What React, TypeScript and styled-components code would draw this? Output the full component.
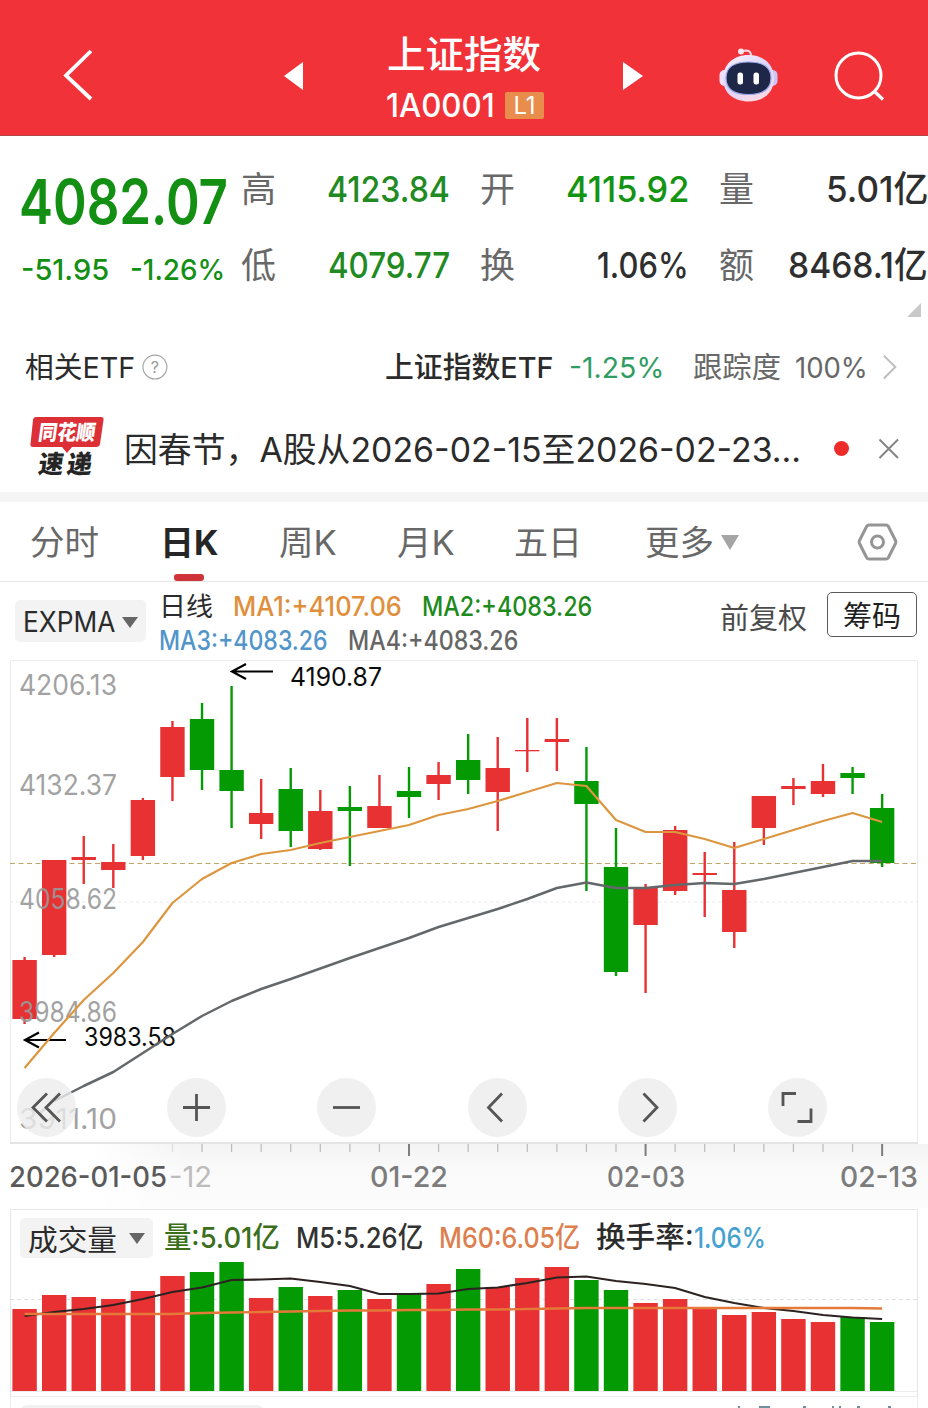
import React, { useLayoutEffect, useRef, useState } from "react";
import styled, { createGlobalStyle } from "styled-components";

const RED = "#e73133";
const GREEN = "#049a04";
const FONT = `Inter, "Noto Sans CJK SC", sans-serif`;

const GlobalStyle = createGlobalStyle`
  * { box-sizing: border-box; }
  body { margin: 0; background: #fff; font-family: ${FONT}; font-feature-settings: "case" 1; }
`;

const FitBox = styled.span<{ $w: number }>`
  display: inline-block;
  flex: none;
  width: ${(p) => p.$w}px;
  white-space: nowrap;
  text-align: left;
`;
const FitInner = styled.span`
  display: inline-block;
  transform-origin: 0 50%;
`;
function Fit({ w, children }: { w: number; children: React.ReactNode }) {
  const ref = useRef<HTMLSpanElement>(null);
  const [scale, setScale] = useState(1);
  useLayoutEffect(() => {
    if (ref.current) setScale(w / ref.current.offsetWidth);
  }, [w]);
  return (
    <FitBox $w={w}>
      <FitInner ref={ref} style={{ transform: `scaleX(${scale})` }}>{children}</FitInner>
    </FitBox>
  );
}

const Screen = styled.main`
  width: 928px;
  height: 1408px;
  overflow: hidden;
  display: flex;
  flex-direction: column;
  background: #fff;
  color: #2b2b2b;
`;

/* ---------- header ---------- */
const Header = styled.header`
  height: 136px;
  flex: none;
  background: #f13239;
  border-bottom: 1px solid #b5484a;
  display: grid;
  grid-template-columns: 62px 32px 190px 20px 1fr 20px 76px 60px 55px 50px 44px;
  align-items: center;
  padding-top: 16px;
  color: #fff;
`;
const TitleBlock = styled.div`
  display: flex;
  flex-direction: column;
  align-items: center;
  padding-top: 9px;
`;
const Title = styled.div`
  font-size: 38px;
  line-height: 50px;
  font-weight: 500;
`;
const CodeRow = styled.div`
  display: flex;
  align-items: center;
  gap: 10px;
  height: 52px;
  margin-left: 2px;
  font-size: 33px;
  font-weight: 500;
`;
const LevelTag = styled.span`
  width: 39px;
  height: 27px;
  border-radius: 2px;
  background: #e88d4b;
  font-size: 24px;
  font-weight: 400;
  line-height: 27px;
  text-align: center;
  padding-left: 1px;
`;

/* ---------- quote ---------- */
const Quote = styled.section`
  height: 194px;
  flex: none;
  position: relative;
  display: grid;
  grid-template-columns: 211px repeat(3, 209px);
  column-gap: 30px;
  padding-top: 15px;
  margin-right: -2px;
`;
const PriceCell = styled.div`
  padding-left: 19px;
  color: #138f13;
`;
const Price = styled.div`
  font-size: 62px;
  line-height: 76px;
  margin-top: 13px;
  font-weight: 600;
`;
const Change = styled.div`
  display: flex;
  gap: 21px;
  font-size: 29px;
  line-height: 36px;
  margin-top: 12px;
  font-weight: 500;
  margin-left: 2px;
`;
const StatCell = styled.dl`
  margin: 0;
`;
const Stat = styled.div`
  height: 76px;
  display: flex;
  align-items: center;
  justify-content: space-between;
`;
const StatName = styled.dt`
  font-size: 35px;
  line-height: 50px;
  color: #686868;
`;
const StatValue = styled.dd<{ $c?: string }>`
  margin: 0;
  font-size: 36px;
  line-height: 50px;
  font-weight: 500;
  color: ${(p) => p.$c || "#2f2f2f"};
`;
const Corner = styled.i`
  position: absolute;
  right: 9px;
  top: 167px;
  border-left: 14px solid transparent;
  border-bottom: 14px solid #c9c9c9;
`;

/* ---------- etf and news ---------- */
const EtfRow = styled.section`
  height: 76px;
  flex: none;
  display: flex;
  align-items: center;
  padding: 0 30px 0 25px;
  font-size: 29px;
  line-height: 40px;
`;
const HelpIcon = styled.svg`
  margin-left: 7px;
`;
const EtfMain = styled.div`
  display: flex;
  margin-left: 216px;
  font-weight: 500;
`;
const EtfChange = styled.span`
  color: #2f9d62;
  font-weight: 400;
  margin-left: 15px;
`;
const EtfTrack = styled.span`
  display: flex;
  gap: 14px;
  color: #686868;
  margin-left: 29px;
  margin-right: 13px;
`;
const NewsRow = styled.section`
  height: 86px;
  flex: none;
  display: flex;
  align-items: center;
  padding: 2px 0 0 30px;
  font-size: 34px;
  line-height: 48px;
`;
const NewsLogo = styled.svg`
  width: 74px;
  height: 62px;
  margin: -6px 20px 0 0;
`;
const Dot = styled.i`
  width: 15px;
  height: 15px;
  border-radius: 50%;
  background: #ee2b2b;
  margin: -4px 29px 0 33px;
`;
const Close = styled.svg`
  margin-top: -2px;
`;
const Band = styled.div`
  height: 10px;
  flex: none;
  background: #f5f5f5;
`;

/* ---------- tabs ---------- */
const Tabs = styled.nav`
  height: 80px;
  flex: none;
  display: flex;
  align-items: center;
  border-bottom: 1px solid #e6e6e6;
  padding: 2px 0 0 30px;
  color: #686868;
  font-size: 34px;
  line-height: 50px;
`;
const Tab = styled.span<{ $gap: number; $active?: boolean }>`
  position: relative;
  margin-right: ${(p) => p.$gap}px;
  font-weight: ${(p) => (p.$active ? 700 : 400)};
  color: ${(p) => (p.$active ? "#262626" : "inherit")};
  &::after {
    content: "";
    display: ${(p) => (p.$active ? "block" : "none")};
    position: absolute;
    left: 14px;
    bottom: -13px;
    width: 30px;
    height: 7px;
    border-radius: 3px;
    background: #cf3438;
  }
`;
const Caret = styled.i<{ $c: string; $s: number; $h: number }>`
  border: ${(p) => p.$s}px solid transparent;
  border-bottom: 0;
  border-top: ${(p) => p.$h}px solid ${(p) => p.$c};
`;
const SettingsIcon = styled.svg`
  margin: -2px 0 0 118px;
`;

/* ---------- indicator legend ---------- */
const Legend = styled.section`
  height: 78px;
  flex: none;
  display: flex;
  align-items: flex-start;
  padding-left: 15px;
`;
const Chip = styled.button<{ $w: number; $h: number; $size: number; $top?: number }>`
  border: 0;
  padding: ${(p) => p.$top || 0}px 8px 0;
  margin: 0;
  width: ${(p) => p.$w}px;
  height: ${(p) => p.$h}px;
  border-radius: 5px;
  background: #f3f3f3;
  display: flex;
  align-items: center;
  justify-content: space-between;
  font-family: inherit;
  font-size: ${(p) => p.$size}px;
  color: #2b2b2b;
`;
const LegendChip = styled.div`
  margin-top: 18px;
`;
const LegendLines = styled.div`
  width: 561px;
  margin: 7px 0 0 13px;
  font-size: 26.5px;
  line-height: 34px;
`;
const LegendLine = styled.div`
  display: flex;
  gap: 20px;
  height: 34px;
`;
const Ink = styled.span<{ $c: string; $pull?: number }>`
  color: ${(p) => p.$c};
  font-weight: 500;
  display: flex;
  margin-left: ${(p) => -(p.$pull || 0)}px;
`;
const Adjust = styled.span`
  font-size: 29px;
  line-height: 42px;
  margin-top: 16px;
  color: #4b4b4b;
`;
const ChipsButton = styled.button`
  width: 90px;
  height: 45px;
  margin: 10px 0 0 20px;
  padding: 3px 0 0;
  background: #fff;
  border: 1px solid #5a5a5a;
  border-radius: 5px;
  font: 29px/41px ${FONT};
  color: #1f1f1f;
`;

/* ---------- charts ---------- */
const ChartArea = styled.section`
  position: relative;
  height: 548px;
  flex: none;
`;
const Plot = styled.svg`
  display: block;
  font-family: ${FONT};
`;
const Controls = styled.div`
  position: absolute;
  left: 17px;
  top: 418px;
  display: flex;
  gap: 91.2px;
`;
const Round = styled.button`
  width: 59px;
  height: 59px;
  padding: 0;
  border: 0;
  border-radius: 50%;
  background: rgba(236, 236, 236, 0.8);
  display: grid;
  place-items: center;
`;
const Volume = styled.section`
  height: 188px;
  flex: none;
  position: relative;
`;
const VolumeHead = styled.div`
  position: absolute;
  left: 20px;
  top: 10px;
  display: flex;
  align-items: center;
  gap: 11px;
  font-size: 29px;
  line-height: 40px;
`;
const VolumeItems = styled.div`
  display: flex;
  gap: 16px;
`;
const NextPanel = styled.section`
  height: 12px;
  flex: none;
  margin: 0 10px;
  border: 1px solid #ececec;
  border-bottom: 0;
  overflow: hidden;
  display: flex;
  justify-content: space-between;
  padding: 8px 20px 0 10px;
`;
const NextChip = styled.span`
  width: 242px;
  height: 40px;
  border-radius: 6px;
  background: #f1f1f1;
`;

const X0 = 24.6;
const STEP = 29.57;
const cx = (i: number) => X0 + STEP * i;

/* [rising, body top, body bottom, high, low, volume top] */
const DAYS: [number, number, number, number, number, number][] = [
  [1, 960, 1019, 957, 1024, 1309], [1, 860, 955, 860, 957, 1295], [1, 857, 860, 836, 884, 1297],
  [1, 862, 870, 844, 888, 1299], [1, 800, 856, 798, 860, 1291], [1, 727, 777, 721, 801, 1276],
  [0, 719, 770, 703, 790, 1272], [0, 770, 791, 686, 828, 1262], [1, 813, 824, 779, 839, 1298],
  [0, 789, 831, 768, 847, 1287], [1, 811, 849, 790, 850, 1296], [0, 807, 811, 786, 866, 1290],
  [1, 806, 828, 775, 828, 1299], [0, 791, 797, 767, 818, 1293], [1, 775, 784, 762, 800, 1284],
  [0, 760, 780, 734, 794, 1269], [1, 768, 792, 737, 831, 1287], [1, 750, 751, 718, 772, 1278],
  [1, 739, 742, 718, 771, 1267], [0, 781, 804, 747, 891, 1280], [0, 867, 972, 828, 976, 1290],
  [1, 887, 925, 884, 993, 1303], [1, 830, 891, 826, 895, 1299], [1, 873, 875, 852, 917, 1308],
  [1, 890, 932, 842, 948, 1315], [1, 796, 828, 796, 845, 1312], [1, 786, 789, 778, 805, 1319],
  [1, 781, 794, 764, 797, 1322], [0, 773, 778, 767, 794, 1317], [0, 808, 863, 794, 867, 1322],
];
const FAST = [1068, 1033, 1000, 973, 942, 903, 879, 863, 854, 850, 843, 837, 831, 825, 815, 809, 801, 792, 783, 786, 820, 832, 832, 839, 848, 839, 830, 821, 813, 822];
const SLOW = [1115, 1101, 1086, 1072, 1053, 1034, 1016, 1001, 989, 979, 968.5, 958, 948, 938, 927, 918, 909, 899, 888, 882.5, 888, 888, 885, 883, 884, 879, 873, 867, 861, 861];
const VOL5 = [1316, 1312, 1309, 1305, 1299, 1292, 1287.5, 1280, 1279.5, 1278.5, 1282, 1286, 1294, 1294, 1293.5, 1289, 1287.5, 1283, 1277.5, 1276.5, 1281, 1284, 1288, 1297, 1303, 1308, 1311, 1315, 1317.5, 1319];
const VOL60 = [1314, 1314, 1314, 1314, 1314, 1314, 1313, 1312.5, 1312, 1311.5, 1311, 1310.5, 1310.5, 1310, 1310, 1309.5, 1309.5, 1309, 1308.5, 1308, 1308, 1308, 1308, 1308, 1308, 1308, 1308, 1308, 1308, 1308.5];
const line = (v: number[], from = 0) =>
  v.slice(from).map((y, i) => `${cx(i + from).toFixed(1)},${y}`).join(" ");

const LEVELS: [string, number][] = [["4206.13", 695], ["4132.37", 795], ["4058.62", 909], ["3984.86", 1022], ["3911.10", 1129]];

function Candles() {
  return (
    <Plot width="928" height="548" viewBox="0 660 928 548">
      <defs>
        <linearGradient id="axis" x1="0" x2="0" y1="0" y2="1">
          <stop offset="0" stopColor="#f3f3f3" />
          <stop offset="0.4" stopColor="#fafafa" />
          <stop offset="1" stopColor="#fcfcfc" />
        </linearGradient>
        <linearGradient id="axisFade" x1="0" x2="1" y1="0" y2="0">
          <stop offset="0.1" stopColor="#fff" />
          <stop offset="0.2" stopColor="#fff" stopOpacity="0" />
        </linearGradient>
      </defs>
      <rect x="0" y="1144" width="928" height="64" fill="url(#axis)" />
      <rect x="0" y="1144" width="928" height="64" fill="url(#axisFade)" />
      <path d="M10.500 660.500H917.500V1143H10.500Z" fill="#fff" stroke="#ebebeb" />
      <path d="M10 1143H918" stroke="#e4e4e4" strokeWidth="2" />
      <path d="M10 902H917" stroke="#e9e9e9" strokeDasharray="3 3" />
      <path d="M10 863.500H917" stroke="#c2a468" strokeDasharray="5 3.500" strokeWidth="1.200" />
      {DAYS.map(([up, top, bottom, high, low], i) => (
        <g key={i} fill={up ? RED : GREEN}>
          <rect x={cx(i) - 1.2} y={high} width="2.4" height={low - high} />
          <rect x={cx(i) - 12.2} y={top} width="24.4" height={Math.max(bottom - top, 1.3)} />
        </g>
      ))}
      <g fontSize="28.500" fill="#999" fillOpacity="0.92">
        {LEVELS.map(([t, y]) => (
          <text key={t} x="19" y={y} textLength="98" lengthAdjust="spacingAndGlyphs">{t}</text>
        ))}
      </g>
      <g fontSize="25" fill="#0c0c0c">
        <text x="290" y="686" textLength="92" lengthAdjust="spacingAndGlyphs">4190.87</text>
        <text x="84" y="1046" textLength="92" lengthAdjust="spacingAndGlyphs">3983.58</text>
      </g>
      <g stroke="#000" strokeWidth="2.200" fill="none">
        <path d="M273 671.500H232M246 664L232 671.500L246 679" />
        <path d="M66 1040H25M39 1032.500L25 1040L39 1047.500" />
      </g>
      <polyline points={line(SLOW, 1)} fill="none" stroke="#64686a" strokeWidth="2.500" strokeLinejoin="round" />
      <polyline points={line(FAST)} fill="none" stroke="#dc963f" strokeWidth="2.200" strokeLinejoin="round" />
      {DAYS.map((_, i) => {
        if (i < 5) return null;
        const major = i === 13 || i === 21 || i === 29;
        return (
          <rect key={i} x={cx(i) - (major ? 1 : 0.6)} y="1144" width={major ? 2 : 1.2} height={major ? 12 : 8} fill={major ? "#7d7d7d" : i === 5 ? "#dedede" : "#bababa"} />
        );
      })}
      <g fontSize="28.500" fontWeight="500" fill="#7c7c7c">
        <text x="9" y="1187" fill="#5a5a5a" textLength="158" lengthAdjust="spacingAndGlyphs">2026-01-05</text>
        <text x="169" y="1187" fill="#bcbcbc" fontWeight="400" textLength="43" lengthAdjust="spacingAndGlyphs">-12</text>
        <text x="370" y="1187" textLength="78" lengthAdjust="spacingAndGlyphs">01-22</text>
        <text x="607" y="1187" textLength="78" lengthAdjust="spacingAndGlyphs">02-03</text>
        <text x="840" y="1187" textLength="78" lengthAdjust="spacingAndGlyphs">02-13</text>
      </g>
    </Plot>
  );
}

function VolumeBars() {
  return (
    <Plot width="928" height="188" viewBox="0 1208 928 188">
      <path d="M10.500 1396V1209.500H917.500V1396" fill="none" stroke="#e6e6e6" />
      <path d="M10 1299.500H917" stroke="#dfe3e0" strokeDasharray="4 3" />
      <path d="M10 1391.500H917" stroke="#ececec" />
      {DAYS.map((d, i) => (
        <rect key={i} x={cx(i) - 12.2} y={d[5]} width="24.4" height={1391 - d[5]} fill={d[0] ? RED : GREEN} />
      ))}
      <polyline points={line(VOL5)} fill="none" stroke="#2d2222" strokeWidth="2.200" />
      <polyline points={line(VOL60)} fill="none" stroke="#e5793a" strokeWidth="2.400" />
    </Plot>
  );
}

const ICONS = [
  "M30 15.500L16 29.500L30 43.500M43 15.500L29 29.500L43 43.500",
  "M16 29.500H43M29.500 16V43",
  "M16 29.500H43",
  "M34 15.500L20.500 29.500L34 43.500",
  "M25.500 15.500L39 29.500L25.500 43.500",
  "M15 28V15.500H28M43 30.500V43.500H29.500",
];

function Robot() {
  return (
    <svg width="60" height="56" viewBox="0 0 60 56">
      <defs>
        <linearGradient id="shell" x1="0" x2="0.6" y1="0" y2="1">
          <stop offset="0" stopColor="#fff4fb" />
          <stop offset="0.55" stopColor="#d9d3fb" />
          <stop offset="1" stopColor="#fbd9e6" />
        </linearGradient>
      </defs>
      <path d="M22 3L28 2.500Q32 3 32 8" fill="none" stroke="#fbd5df" strokeWidth="2.200" />
      <circle cx="22" cy="3.500" r="3" fill="#ffe6ec" />
      <rect x="0.500" y="22" width="10" height="16" rx="5" fill="#f2dffa" />
      <rect x="48.500" y="22" width="10" height="16" rx="5" fill="#c9c6fa" />
      <path d="M29.500 7C45 7 55 17 55 30.500C55 45 44 53.500 29.500 53.500C15 53.500 4 45 4 30.500C4 17 14 7 29.500 7Z" fill="url(#shell)" />
      <path d="M29.500 14C44 14 52 19 52 30C52 42 43 46.500 29.500 46.500C16 46.500 7 42 7 30C7 19 15 14 29.500 14Z" fill="#1f2748" stroke="#9aa9ea" strokeWidth="1.200" />
      <rect x="18.500" y="24.500" width="5.500" height="12" rx="2.500" fill="#fff" />
      <rect x="34.500" y="24.500" width="5.500" height="12" rx="2.500" fill="#fff" />
    </svg>
  );
}

export default function App() {
  return (
    <Screen>
      <GlobalStyle />
      <Header>
        <span />
        <svg width="32" height="54" viewBox="0 0 32 54"><path d="M29 2L4 26.500L29 50" fill="none" stroke="#fff" strokeWidth="3.800" /></svg>
        <span />
        <svg width="20" height="30" viewBox="0 0 20 30"><path d="M0 15L19 1V29Z" fill="#fff" /></svg>
        <TitleBlock>
          <Title><Fit w={154}>上证指数</Fit></Title>
          <CodeRow><Fit w={109}>1A0001</Fit><LevelTag>L1</LevelTag></CodeRow>
        </TitleBlock>
        <svg width="20" height="30" viewBox="0 0 20 30"><path d="M20 15L0 1V29Z" fill="#fff" /></svg>
        <span />
        <Robot />
        <span />
        <svg width="52" height="52" viewBox="0 0 52 52"><circle cx="24.500" cy="25.500" r="22.500" fill="none" stroke="#fff" strokeWidth="3" /><path d="M40 41L49 49.500" stroke="#fff" strokeWidth="3.200" /></svg>
      </Header>

      <Quote>
        <PriceCell>
          <Price><Fit w={209}>4082.07</Fit></Price>
          <Change><Fit w={88}>-51.95</Fit><Fit w={95}>-1.26%</Fit></Change>
        </PriceCell>
        <StatCell>
          <Stat><StatName>高</StatName><StatValue $c="#228a22"><Fit w={123}>4123.84</Fit></StatValue></Stat>
          <Stat><StatName>低</StatName><StatValue $c="#228a22"><Fit w={122}>4079.77</Fit></StatValue></Stat>
        </StatCell>
        <StatCell>
          <Stat><StatName>开</StatName><StatValue $c="#139413"><Fit w={123}>4115.92</Fit></StatValue></Stat>
          <Stat><StatName>换</StatName><StatValue><Fit w={92}>1.06%</Fit></StatValue></Stat>
        </StatCell>
        <StatCell>
          <Stat><StatName>量</StatName><StatValue><Fit w={102}>5.01亿</Fit></StatValue></Stat>
          <Stat><StatName>额</StatName><StatValue><Fit w={140}>8468.1亿</Fit></StatValue></Stat>
        </StatCell>
        <Corner />
      </Quote>

      <EtfRow>
        <Fit w={110}>相关ETF</Fit>
        <HelpIcon width="28" height="28" viewBox="0 0 28 28">
          <circle cx="13.500" cy="13" r="12.500" fill="none" stroke="#a3a3a3" strokeWidth="1.200" />
          <text x="13.500" y="19" textAnchor="middle" fontSize="17" fill="#999">?</text>
        </HelpIcon>
        <EtfMain>
          <Fit w={169}>上证指数ETF</Fit>
          <EtfChange><Fit w={95}>-1.25%</Fit></EtfChange>
        </EtfMain>
        <EtfTrack><Fit w={88}>跟踪度</Fit><Fit w={73}>100%</Fit></EtfTrack>
        <svg width="18" height="30" viewBox="0 0 18 30"><path d="M3 2L15 14L3 26" fill="none" stroke="#bdbdbd" strokeWidth="2" /></svg>
      </EtfRow>

      <NewsRow>
        <NewsLogo viewBox="0 0 74 62" fontFamily={FONT} fontWeight="900">
          <path d="M6 1H71Q74 1 73.500 4L70 28Q69.500 31 66 31H42L37 37L32 31H3Q0 31 0.500 28L3 4Q3.500 1 6 1Z" fill="#dc3036" />
          <g transform="skewX(-8)">
            <text x="11" y="24.500" fontSize="21" fill="#fff" textLength="57" lengthAdjust="spacingAndGlyphs">同花顺</text>
            <text x="15.500" y="57" fontSize="25" fill="#252525" textLength="25" lengthAdjust="spacingAndGlyphs">速</text>
            <text x="44" y="57" fontSize="25" fill="#252525" textLength="25" lengthAdjust="spacingAndGlyphs">递</text>
          </g>
        </NewsLogo>
        <Fit w={677}>因春节，A股从2026-02-15至2026-02-23...</Fit>
        <Dot />
        <Close width="22" height="22" viewBox="0 0 22 22"><path d="M1.500 1.500L20 20M20 1.500L1.500 20" stroke="#858585" strokeWidth="2" /></Close>
      </NewsRow>
      <Band />

      <Tabs>
        <Tab $gap={61}><Fit w={69}>分时</Fit></Tab>
        <Tab $gap={61} $active><Fit w={58}>日K</Fit></Tab>
        <Tab $gap={60}><Fit w={58}>周K</Fit></Tab>
        <Tab $gap={59}><Fit w={58}>月K</Fit></Tab>
        <Tab $gap={63}><Fit w={68}>五日</Fit></Tab>
        <Tab $gap={7}><Fit w={69}>更多</Fit></Tab>
        <Caret $c="#a5a5a5" $s={9} $h={15} />
        <SettingsIcon width="42" height="40" viewBox="0 0 42 40">
          <path d="M12 3H29Q30.500 3 31.300 4.300L38.500 18.500Q39.200 20 38.500 21.500L31.300 35.700Q30.500 37 29 37H12Q10.500 37 9.700 35.700L2.500 21.500Q1.800 20 2.500 18.500L9.700 4.300Q10.500 3 12 3Z" fill="none" stroke="#959595" strokeWidth="3" />
          <circle cx="20.500" cy="20" r="6" fill="none" stroke="#959595" strokeWidth="3" />
        </SettingsIcon>
      </Tabs>

      <Legend>
        <LegendChip>
          <Chip $w={131} $h={42} $size={28} $top={2}><Fit w={92}>EXPMA</Fit><Caret $c="#666" $s={8} $h={11} /></Chip>
        </LegendChip>
        <LegendLines>
          <LegendLine>
            <Fit w={54}>日线</Fit>
            <Ink $c="#e08f3c"><Fit w={169}>MA1:+4107.06</Fit></Ink>
            <Ink $c="#1d8a1d"><Fit w={170}>MA2:+4083.26</Fit></Ink>
          </LegendLine>
          <LegendLine>
            <Ink $c="#5195cb"><Fit w={169}>MA3:+4083.26</Fit></Ink>
            <Ink $c="#666"><Fit w={170}>MA4:+4083.26</Fit></Ink>
          </LegendLine>
        </LegendLines>
        <Adjust>前复权</Adjust>
        <ChipsButton>筹码</ChipsButton>
      </Legend>

      <ChartArea>
        <Candles />
        <Controls>
          {ICONS.map((d) => (
            <Round key={d}>
              <svg width="59" height="59" viewBox="0 0 59 59"><path d={d} fill="none" stroke="#555" strokeWidth="2.800" /></svg>
            </Round>
          ))}
        </Controls>
      </ChartArea>

      <Volume>
        <VolumeBars />
        <VolumeHead>
          <Chip $w={133} $h={40} $size={29}><Fit w={89}>成交量</Fit><Caret $c="#666" $s={8} $h={11} /></Chip>
          <VolumeItems>
            <Ink $c="#3c6f1c"><Fit w={116}>量:5.01亿</Fit></Ink>
            <Ink $c="#333"><Fit w={127}>M5:5.26亿</Fit></Ink>
            <Ink $c="#dd7f4e"><Fit w={141}>M60:6.05亿</Fit></Ink>
            <Ink $c="#2b2b2b"><Fit w={98}>换手率:</Fit></Ink>
            <Ink $c="#45a1cf" $pull={16}><Fit w={72}>1.06%</Fit></Ink>
          </VolumeItems>
        </VolumeHead>
      </Volume>

      <NextPanel>
        <NextChip />
        <svg width="164" height="3" viewBox="0 0 164 3">
          <path d="M5 2H7M26 2H37M70 2H73M99 2H101M106 2H108M124 2H127M155 2H158" stroke="#6f8f9d" strokeWidth="2" />
        </svg>
      </NextPanel>
    </Screen>
  );
}
